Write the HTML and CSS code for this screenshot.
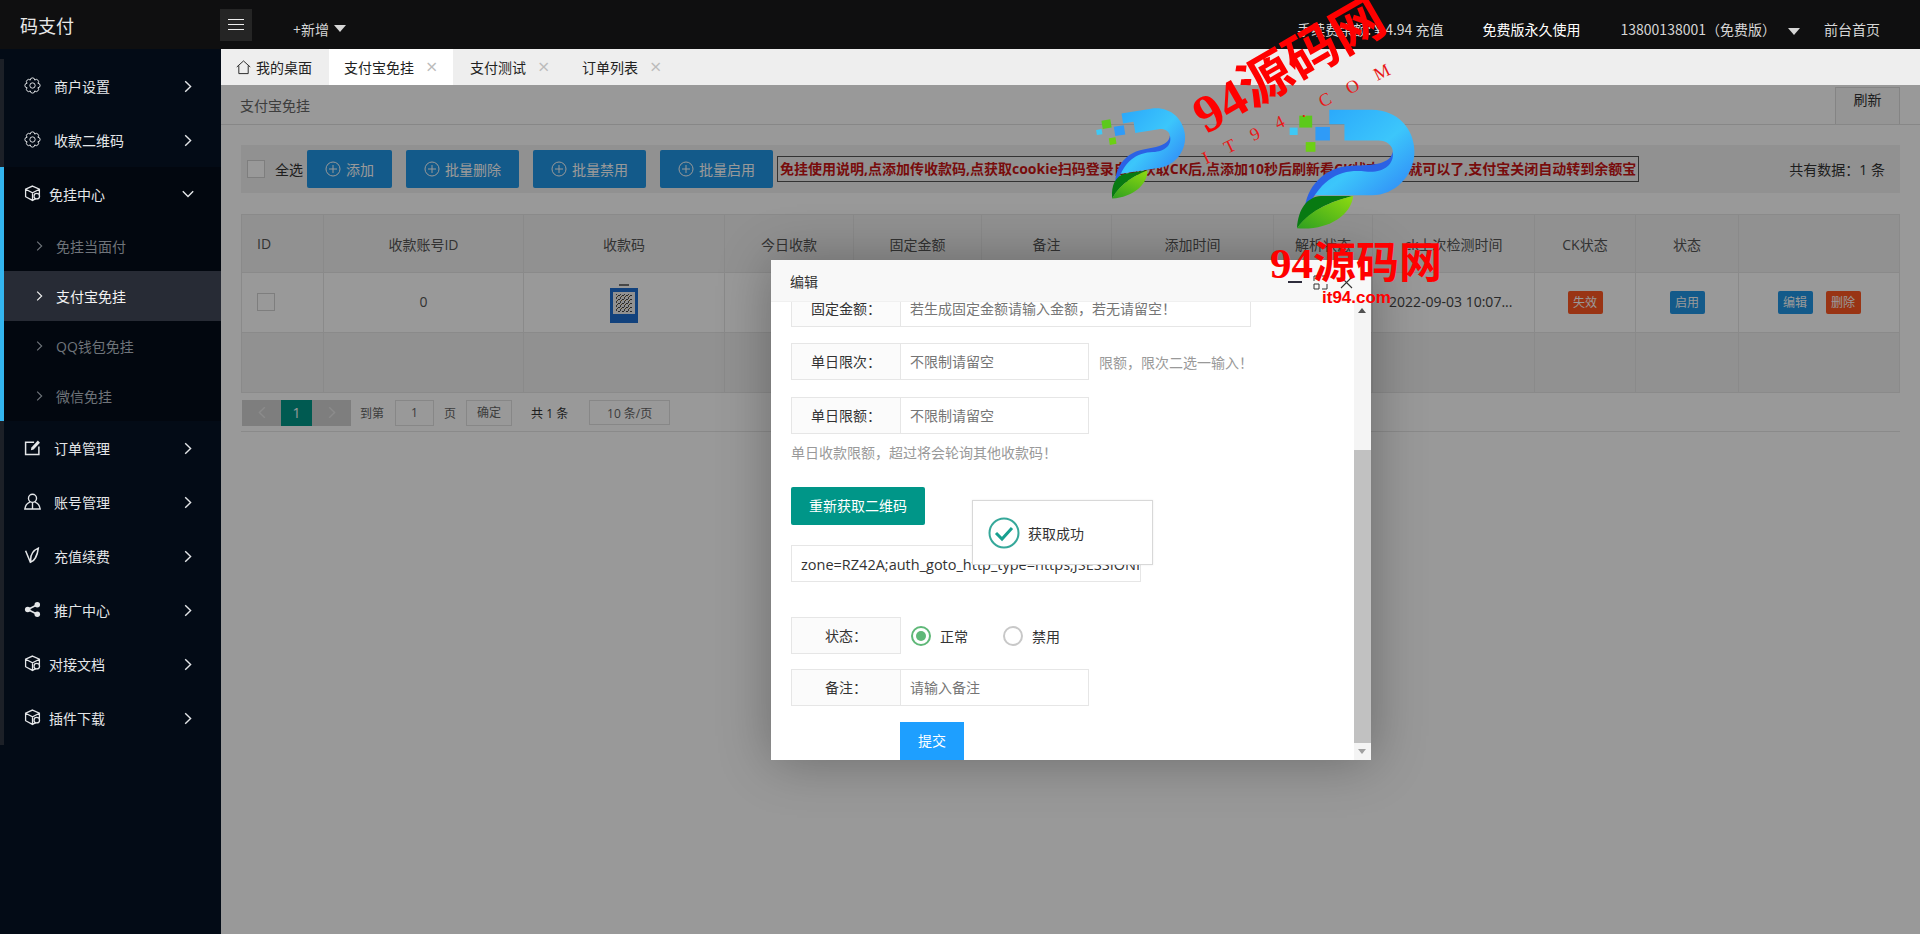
FILE: index.html
```html
<!DOCTYPE html>
<html lang="zh-CN">
<head>
    <meta charset="UTF-8">
    <meta name="viewport" content="width=device-width, initial-scale=1.0">
    <title>码支付</title>
    <link rel="stylesheet" href="styles.css">
</head>
<body>

<svg class="icon-defs" aria-hidden="true">
    <symbol id="i-gear" viewBox="0 0 16 16">
        <path d="M13.08 5.9A2.1 2.1 0 0 1 13.08 10.1A2.1 2.1 0 0 1 10.1 13.08A2.1 2.1 0 0 1 5.9 13.08A2.1 2.1 0 0 1 2.92 10.1A2.1 2.1 0 0 1 2.92 5.9A2.1 2.1 0 0 1 5.9 2.92A2.1 2.1 0 0 1 10.1 2.92A2.1 2.1 0 0 1 13.08 5.9Z" fill="none" stroke="currentColor" stroke-width=".9"/>
        <circle cx="8" cy="8" r="2.5" fill="none" stroke="currentColor" stroke-width=".9"/>
    </symbol>
    <symbol id="i-box" viewBox="0 0 16 16">
        <path d="M8 1L14.5 4V11L8 14.5L1.5 11V4ZM1.5 4L8 7.3L14.5 4M8 7.3V14.5" fill="none" stroke="currentColor" stroke-width="1.2"/>
        <circle cx="12" cy="10.5" r="2.6" fill="#030b16" stroke="currentColor" stroke-width="1.2"/>
    </symbol>
    <symbol id="i-edit" viewBox="0 0 16 16">
        <path d="M9.5 3H1.5V14.5H14V7" fill="none" stroke="currentColor" stroke-width="1.4"/>
        <path d="M6.5 10.5L7 8L13 1.5L15 3.5L9 9.8Z" fill="currentColor"/>
    </symbol>
    <symbol id="i-user" viewBox="0 0 16 16">
        <circle cx="8" cy="5" r="3.8" fill="none" stroke="currentColor" stroke-width="1.3"/>
        <path d="M5.5 8.5C3 9.5 1.2 12 .8 15H15.2C14.8 12 13 9.5 10.5 8.5M8 9.5V15" fill="none" stroke="currentColor" stroke-width="1.3"/>
    </symbol>
    <symbol id="i-leaf" viewBox="0 0 16 16">
        <path d="M1.5 3.5L6 14.5C9 13.5 12.5 9 13.5 1C9 3 5.5 7 6.5 14" fill="none" stroke="currentColor" stroke-width="1.4"/>
    </symbol>
    <symbol id="i-share" viewBox="0 0 16 16">
        <path d="M12.5 3.5L3.5 8L12.5 12.5" fill="none" stroke="currentColor" stroke-width="1.5"/>
        <circle cx="12.5" cy="3.5" r="2.6" fill="currentColor"/>
        <circle cx="3.5" cy="8" r="2.6" fill="currentColor"/>
        <circle cx="12.5" cy="12.5" r="2.6" fill="currentColor"/>
    </symbol>
    <symbol id="i-right" viewBox="0 0 8 12">
        <path d="M1.2 .8L6.6 6L1.2 11.2" fill="none" stroke="currentColor" stroke-width="1.4"/>
    </symbol>
    <symbol id="i-down" viewBox="0 0 12 8">
        <path d="M.8 1.2L6 6.6L11.2 1.2" fill="none" stroke="currentColor" stroke-width="1.4"/>
    </symbol>
    <symbol id="i-plus" viewBox="0 0 16 16">
        <circle cx="8" cy="8" r="7" fill="none" stroke="currentColor" stroke-width="1"/>
        <path d="M8 4V12M4 8H12" fill="none" stroke="currentColor" stroke-width="1"/>
    </symbol>
    <symbol id="i-home" viewBox="0 0 16 16">
        <path d="M.8 7.5L8 1L15.2 7.5M3 6V14.5H13V6" fill="none" stroke="currentColor" stroke-width="1"/>
    </symbol>
    <symbol id="i-logo" viewBox="620 260 400 380">
        <rect x="655" y="283" width="40" height="37" fill="#5cc91c"/>
        <rect x="625" y="320" width="25" height="23" fill="#3fc8f5"/>
        <rect x="705" y="318" width="45" height="42" fill="#2f9bf7"/>
        <rect x="675" y="365" width="30" height="30" fill="#6ccf14"/>
        <path d="M748 265H880C960 265 1012 325 1012 395C1012 470 950 530 880 530H690C730 470 800 440 880 440C925 440 945 425 945 395C945 375 925 360 900 360H795V310H748Z" fill="url(#logo-blue)"/>
        <path d="M945 395C950 440 910 462 860 456C790 448 720 470 672 590C668 520 720 450 800 440C850 434 935 445 945 395Z" fill="#2b62e4"/>
        <path d="M648 632C652 570 680 535 722 532H822C770 545 700 565 648 632Z" fill="#087a12"/>
        <path d="M648 632C690 570 770 545 822 532C815 595 740 640 648 632Z" fill="url(#logo-green)"/>
    </symbol>
    <pattern id="qr-dots" width="4" height="4" patternUnits="userSpaceOnUse">
        <rect width="4" height="4" fill="#eee"/>
        <rect width="2" height="1" fill="#444"/>
        <rect x="2" y="2" width="1" height="2" fill="#555"/>
        <rect x="3" y="1" width="1" height="1" fill="#7a5a20"/>
    </pattern>
    <linearGradient id="logo-blue" x1="0" y1="0" x2="1" y2="1">
        <stop offset="0" stop-color="#28a4fb"/>
        <stop offset=".55" stop-color="#3cc6fb"/>
        <stop offset="1" stop-color="#2f84f6"/>
    </linearGradient>
    <linearGradient id="logo-green" x1="0" y1="1" x2="1" y2="0">
        <stop offset="0" stop-color="#2e9f20"/>
        <stop offset="1" stop-color="#8edb10"/>
    </linearGradient>
</svg>

<header class="topbar">
    <div class="brand">码支付</div>
    <button class="menu-btn" type="button"><span></span><span></span><span></span></button>
    <div class="top-add">+新增<i class="caret"></i></div>
    <div class="top-right">
        <span class="top-fee">手续费余额:￥4.94 充值</span>
        <span class="top-free">免费版永久使用</span>
        <span class="top-user">13800138001（免费版）<i class="caret"></i></span>
        <span class="top-home">前台首页</span>
    </div>
</header>

<div class="layout">
    <aside class="sidebar">
        <div class="nav-item"><svg class="nav-icon"><use href="#i-gear"/></svg><span class="nav-text">商户设置</span><svg class="nav-arrow"><use href="#i-right"/></svg></div>
        <div class="nav-item"><svg class="nav-icon"><use href="#i-gear"/></svg><span class="nav-text">收款二维码</span><svg class="nav-arrow"><use href="#i-right"/></svg></div>
        <div class="nav-group">
            <div class="nav-item"><svg class="nav-icon"><use href="#i-box"/></svg><span class="nav-text nav-text-tight">免挂中心</span><svg class="nav-arrow-down"><use href="#i-down"/></svg></div>
            <div class="sub-item"><svg class="sub-arrow"><use href="#i-right"/></svg>免挂当面付</div>
            <div class="sub-item active"><svg class="sub-arrow"><use href="#i-right"/></svg>支付宝免挂</div>
            <div class="sub-item"><svg class="sub-arrow"><use href="#i-right"/></svg>QQ钱包免挂</div>
            <div class="sub-item"><svg class="sub-arrow"><use href="#i-right"/></svg>微信免挂</div>
        </div>
        <div class="nav-item"><svg class="nav-icon"><use href="#i-edit"/></svg><span class="nav-text">订单管理</span><svg class="nav-arrow"><use href="#i-right"/></svg></div>
        <div class="nav-item"><svg class="nav-icon"><use href="#i-user"/></svg><span class="nav-text">账号管理</span><svg class="nav-arrow"><use href="#i-right"/></svg></div>
        <div class="nav-item"><svg class="nav-icon"><use href="#i-leaf"/></svg><span class="nav-text">充值续费</span><svg class="nav-arrow"><use href="#i-right"/></svg></div>
        <div class="nav-item"><svg class="nav-icon"><use href="#i-share"/></svg><span class="nav-text">推广中心</span><svg class="nav-arrow"><use href="#i-right"/></svg></div>
        <div class="nav-item"><svg class="nav-icon"><use href="#i-box"/></svg><span class="nav-text nav-text-tight">对接文档</span><svg class="nav-arrow"><use href="#i-right"/></svg></div>
        <div class="nav-item"><svg class="nav-icon"><use href="#i-box"/></svg><span class="nav-text nav-text-tight">插件下载</span><svg class="nav-arrow"><use href="#i-right"/></svg></div>
    </aside>

    <main class="main">
        <div class="tabs">
            <div class="tab"><svg class="tab-home"><use href="#i-home"/></svg>我的桌面</div>
            <div class="tab active">支付宝免挂<span class="tab-close">×</span></div>
            <div class="tab">支付测试<span class="tab-close">×</span></div>
            <div class="tab">订单列表<span class="tab-close">×</span></div>
        </div>

        <div class="frame">
            <div class="crumb">
                <span class="crumb-text">支付宝免挂</span>
                <span class="refresh">刷新</span>
            </div>

            <div class="page">
                <div class="toolbar">
                    <span class="check"></span>
                    <span class="check-label">全选</span>
                    <span class="btn"><svg class="btn-icon"><use href="#i-plus"/></svg>添加</span>
                    <span class="btn"><svg class="btn-icon"><use href="#i-plus"/></svg>批量删除</span>
                    <span class="btn"><svg class="btn-icon"><use href="#i-plus"/></svg>批量禁用</span>
                    <span class="btn"><svg class="btn-icon"><use href="#i-plus"/></svg>批量启用</span>
                    <span class="notice">免挂使用说明,点添加传收款码,点获取cookie扫码登录自动获取CK后,点添加10秒后刷新看CK状态正常就可以了,支付宝关闭自动转到余额宝</span>
                    <span class="total">共有数据：1 条</span>
                </div>

                <table class="grid">
                    <colgroup>
                        <col class="c-82"><col class="c-200"><col class="c-201"><col class="c-129"><col class="c-128"><col class="c-130">
                        <col class="c-162"><col class="c-99"><col class="c-162"><col class="c-101"><col class="c-103"><col class="c-161">
                    </colgroup>
                    <thead>
                        <tr>
                            <th class="left">ID</th><th>收款账号ID</th><th>收款码</th><th>今日收款</th><th>固定金额</th><th>备注</th>
                            <th>添加时间</th><th>解析状态</th><th>ck上次检测时间</th><th>CK状态</th><th>状态</th><th></th>
                        </tr>
                    </thead>
                    <tbody>
                        <tr>
                            <td class="left up"><span class="check"></span></td>
                            <td class="up">0</td>
                            <td>
                                <svg class="qr" viewBox="0 0 28 40">
                                    <rect x="9" y="1" width="10" height="2" fill="#777"/>
                                    <rect y="5" width="28" height="35" fill="#1e6fd0"/>
                                    <rect x="3" y="9" width="22" height="22" fill="#f2f2f2"/>
                                    <rect x="6" y="11" width="16" height="18" fill="url(#qr-dots)"/>
                                </svg>
                            </td>
                            <td></td><td></td><td></td><td></td><td></td>
                            <td class="time up">2022-09-03 10:07...</td>
                            <td><span class="badge badge-red">失效</span></td>
                            <td><span class="badge badge-blue">启用</span></td>
                            <td><span class="badge badge-blue">编辑</span><span class="badge badge-red badge-gap">删除</span></td>
                        </tr>
                        <tr class="blank"><td></td><td></td><td></td><td></td><td></td><td></td><td></td><td></td><td></td><td></td><td></td><td></td></tr>
                    </tbody>
                </table>

                <div class="pager">
                    <span class="pg-nav"><svg class="pg-arrow flip"><use href="#i-right"/></svg></span>
                    <span class="pg-cur">1</span>
                    <span class="pg-nav"><svg class="pg-arrow"><use href="#i-right"/></svg></span>
                    <span class="pg-text pg-to">到第</span>
                    <span class="pg-input">1</span>
                    <span class="pg-text">页</span>
                    <span class="pg-ok">确定</span>
                    <span class="pg-count">共 1 条</span>
                    <span class="pg-size">10 条/页</span>
                </div>
            </div>

            <div class="shade"></div>
        </div>
    </main>
</div>

<section class="modal">
    <div class="modal-head">
        <span>编辑</span>
        <div class="modal-tools">
            <i class="tool-min"></i>
            <svg class="tool-svg" viewBox="0 0 15 15"><path d="M1 6V1H6M9 14H14V9M1 9H6V14H1ZM9 1H14" fill="none" stroke="#333" stroke-width="1"/></svg>
            <svg class="tool-svg" viewBox="0 0 15 15"><path d="M2 2L13 13M13 2L2 13" fill="none" stroke="#333" stroke-width="1.1"/></svg>
        </div>
    </div>
    <div class="modal-body">
        <div class="form">
            <div class="row">
                <label class="row-label">固定金额：</label>
                <div class="row-input wide">若生成固定金额请输入金额，若无请留空！</div>
            </div>
            <div class="row row-gap">
                <label class="row-label">单日限次：</label>
                <div class="row-input">不限制请留空</div>
                <span class="row-aux">限额，限次二选一输入！</span>
            </div>
            <div class="row row-gap2">
                <label class="row-label">单日限额：</label>
                <div class="row-input">不限制请留空</div>
            </div>
            <p class="help">单日收款限额，超过将会轮询其他收款码！</p>
            <div class="green-btn">重新获取二维码</div>
            <div class="cookie">zone=RZ42A;auth_goto_http_type=https;JSESSIONID=RZ42</div>
            <div class="row row-state">
                <label class="row-label row-label-plain">状态：</label>
                <span class="radio on"></span><span class="radio-text">正常</span>
                <span class="radio"></span><span class="radio-text">禁用</span>
            </div>
            <div class="row row-note">
                <label class="row-label">备注：</label>
                <div class="row-input">请输入备注</div>
            </div>
            <div class="submit">提交</div>
        </div>
        <div class="scroll">
            <i class="scroll-up"></i>
            <div class="scroll-track"><div class="scroll-thumb"></div></div>
            <i class="scroll-down"></i>
        </div>
    </div>
</section>

<div class="toast">
    <svg class="toast-icon" viewBox="0 0 32 32">
        <circle cx="16" cy="16" r="14.5" fill="none" stroke="#36a89a" stroke-width="2"/>
        <path d="M8 16L14 22L24 11" fill="none" stroke="#18a090" stroke-width="3"/>
    </svg>
    <span>获取成功</span>
</div>

<!-- watermark stamped over the screenshot -->
<svg class="logo logo-small"><use href="#i-logo"/></svg>
<svg class="logo logo-big"><use href="#i-logo"/></svg>
<div class="mark mark-tilt">94源码网</div>
<div class="mark-sub">IT94.COM</div>
<div class="mark mark-flat">94源码网</div>
<div class="mark-url">it94.com</div>

</body>
</html>
```

FILE: styles.css
```css
* {
    box-sizing: border-box;
}
html, body {
    height: 100%;
}
body {
    margin: 0;
    overflow: hidden;
    font-family: "Open Sans", "Noto Sans CJK SC", sans-serif;
    font-size: 14px;
    color: #333;
    background: #fff;
}
.icon-defs {
    position: absolute;
    width: 0;
    height: 0;
}

/* top bar */
.topbar {
    display: flex;
    align-items: center;
    height: 49px;
    background: #0f0f10;
    color: #d6d6d6;
}
.brand {
    width: 220px;
    padding-left: 20px;
    font-size: 18px;
    color: #e8e8e8;
}
.menu-btn {
    display: flex;
    flex-direction: column;
    justify-content: center;
    gap: 4px;
    width: 32px;
    height: 32px;
    padding: 0 8px;
    border: 0;
    background: #252525;
}
.menu-btn span {
    display: block;
    height: 1px;
    background: #eee;
}
.top-add {
    display: flex;
    align-items: center;
    margin-left: 41px;
    padding-top: 8px;
}
.caret {
    display: inline-block;
    width: 0;
    height: 0;
    margin-left: 5px;
    border-left: 6px solid transparent;
    border-right: 6px solid transparent;
    border-top: 7px solid #d6d6d6;
}
.top-right {
    display: flex;
    align-items: center;
    margin-left: auto;
    padding: 8px 40px 0 0;
    white-space: nowrap;
}
.top-fee {
    font-family: "Noto Sans CJK SC", sans-serif;
}
.top-free {
    margin-left: 39px;
    color: #fff;
}
.top-user {
    margin-left: 40px;
    font-family: "Noto Sans CJK SC", sans-serif;
}
.top-user .caret {
    margin-left: 12px;
}
.top-home {
    margin-left: 24px;
}

/* sidebar */
.layout {
    display: flex;
    height: calc(100% - 49px);
}
.sidebar {
    flex: 0 0 221px;
    padding-top: 10px;
    background: #030b16;
    color: #e4e6e8;
}
.nav-item {
    display: flex;
    align-items: center;
    height: 54px;
    padding-left: 20px;
    border-left: 4px solid #1c2027;
}
.nav-group {
    background: #02070f;
}
.nav-group .nav-item, .sub-item {
    border-left-color: #33b5ef;
}
.nav-icon {
    flex: none;
    width: 17px;
    height: 17px;
    margin-top: -2px;
}
.nav-text {
    margin-left: 13px;
    margin-top: -1px;
}
.nav-text-tight {
    margin-left: 8px;
}
.nav-arrow {
    width: 8px;
    height: 13px;
    margin-left: auto;
    margin-right: 29px;
}
.nav-arrow-down {
    width: 12px;
    height: 8px;
    margin-left: auto;
    margin-right: 27px;
}
.sub-item {
    display: flex;
    align-items: center;
    height: 50px;
    padding-left: 32px;
    border-left: 4px solid #33b5ef;
    color: #6f747a;
}
.sub-item.active {
    background: #272b35;
    color: #f2f2f2;
}
.sub-arrow {
    width: 7px;
    height: 10px;
    margin-right: 13px;
}

/* tabs */
.main {
    flex: 1;
    min-width: 0;
    display: flex;
    flex-direction: column;
}
.tabs {
    display: flex;
    gap: 2px;
    height: 36px;
    background: #eee;
    color: #222;
}
.tab {
    display: flex;
    align-items: center;
    padding: 0 15px;
}
.tab.active {
    background: #fff;
}
.tab-home {
    width: 15px;
    height: 15px;
    margin-right: 5px;
}
.tab-close {
    margin-left: 12px;
    width: 12px;
    font-size: 20px;
    line-height: 1;
    color: #bbb;
}

/* page under the shade */
.frame {
    position: relative;
    flex: 1;
    background: #fff;
}
.crumb {
    display: flex;
    justify-content: space-between;
    align-items: flex-end;
    height: 40px;
    padding: 0 20px 0 19px;
    border-bottom: 1px solid #e2e2e2;
}
.crumb-text {
    align-self: center;
    color: #666;
}
.refresh {
    width: 65px;
    height: 37px;
    padding-top: 1px;
    border: 1px solid #ddd;
    border-bottom: 0;
    background: #f8f8f8;
    text-align: center;
}
.page {
    padding: 20px 20px 0;
}
.toolbar {
    display: flex;
    align-items: center;
    height: 48px;
    padding: 0 15px 0 6px;
    background: #f2f2f2;
    white-space: nowrap;
}
.check {
    display: inline-block;
    width: 18px;
    height: 18px;
    border: 1px solid #d2d2d2;
    background: #fff;
    vertical-align: middle;
}
.check-label {
    margin: 0 4px 0 10px;
}
.btn {
    display: flex;
    align-items: center;
    height: 38px;
    margin-right: 14px;
    padding: 0 18px;
    border-radius: 2px;
    background: #2196e6;
    color: #fff;
}
.btn-icon {
    width: 16px;
    height: 16px;
    margin-right: 5px;
}
.notice {
    margin-left: -10px;
    padding: 2px;
    border: 1px solid #555;
    font-weight: 700;
    color: #c91414;
    line-height: 20px;
}
.total {
    margin-left: auto;
    color: #333;
}
.grid {
    width: 1658px;
    margin-top: 21px;
    table-layout: fixed;
    border-collapse: collapse;
    color: #555;
}
.c-82 { width: 82px; }
.c-200 { width: 200px; }
.c-201 { width: 201px; }
.c-129 { width: 129px; }
.c-128 { width: 128px; }
.c-130 { width: 130px; }
.c-162 { width: 162px; }
.c-99 { width: 99px; }
.c-101 { width: 101px; }
.c-103 { width: 103px; }
.c-161 { width: 161px; }
.grid th {
    height: 58px;
    border: 1px solid #e6e6e6;
    background: #f2f2f2;
    font-weight: 400;
    white-space: nowrap;
}
.grid td {
    height: 60px;
    border: 1px solid #e6e6e6;
    text-align: center;
}
.grid .blank td {
    background: #f2f2f2;
}
.grid .left {
    padding-left: 15px;
    text-align: left;
}
.grid .up {
    padding-bottom: 4px;
}
.grid .time {
    padding-left: 16px;
    text-align: left;
    white-space: nowrap;
    color: #444;
}
.qr {
    display: block;
    width: 28px;
    height: 40px;
    margin: 0 auto;
}
.badge {
    display: inline-block;
    width: 35px;
    height: 23px;
    border-radius: 2px;
    font-size: 12px;
    line-height: 23px;
    color: #fff;
}
.badge-red {
    background: #ff5722;
}
.badge-blue {
    background: #2196e6;
}
.badge-gap {
    margin-left: 13px;
}
.pager {
    display: flex;
    align-items: center;
    height: 39px;
    padding: 7px 0 6px 1px;
    border-bottom: 1px solid #e6e6e6;
    color: #666;
}
.pg-nav {
    display: flex;
    align-items: center;
    justify-content: center;
    width: 39px;
    height: 26px;
    background: #d2d2d2;
    color: #e8e8e8;
}
.pg-arrow {
    width: 8px;
    height: 13px;
}
.flip {
    transform: scaleX(-1);
}
.pg-cur {
    width: 31px;
    height: 26px;
    background: #009688;
    color: #fff;
    line-height: 26px;
    text-align: center;
}
.pg-text {
    font-size: 12px;
}
.pg-to {
    margin: 0 11px 0 9px;
}
.pg-input {
    width: 39px;
    height: 26px;
    margin-right: 10px;
    border: 1px solid #e2e2e2;
    font-size: 12px;
    line-height: 24px;
    text-align: center;
}
.pg-ok {
    width: 46px;
    height: 26px;
    margin-left: 10px;
    border: 1px solid #e2e2e2;
    font-size: 12px;
    line-height: 24px;
    text-align: center;
}
.pg-count {
    margin-left: 19px;
    font-size: 12px;
    color: #333;
}
.pg-size {
    width: 81px;
    height: 25px;
    margin-left: 21px;
    border: 1px solid #e2e2e2;
    font-size: 12px;
    line-height: 25px;
    text-align: center;
}
.shade {
    position: absolute;
    inset: 0;
    background: rgba(0, 0, 0, 0.4);
}

/* modal */
.modal {
    position: absolute;
    left: 771px;
    top: 260px;
    width: 600px;
    height: 500px;
    display: flex;
    flex-direction: column;
    overflow: hidden;
    background: #fff;
    box-shadow: 1px 1px 50px rgba(0, 0, 0, 0.3);
}
.modal-head {
    position: relative;
    flex: none;
    display: flex;
    justify-content: space-between;
    align-items: center;
    height: 42px;
    padding: 0 17px 0 19px;
    border-bottom: 1px solid #f0f0f0;
    background: #f8f8f8;
}
.modal-tools {
    display: flex;
    align-items: center;
    gap: 11px;
    padding-top: 3px;
}
.tool-min {
    width: 14px;
    height: 2px;
    background: #2e2d3c;
}
.tool-svg {
    width: 15px;
    height: 15px;
}
.modal-body {
    flex: 1;
    min-height: 0;
    display: flex;
}
.form {
    flex: 1;
    margin-top: -12px;
    padding-left: 20px;
}
.row {
    display: flex;
    align-items: center;
    height: 37px;
}
.row-gap {
    margin-top: 16px;
}
.row-gap2 {
    margin-top: 17px;
}
.row-state {
    margin-top: 35px;
}
.row-note {
    margin-top: 15px;
}
.row-label {
    flex: none;
    width: 110px;
    height: 100%;
    border: 1px solid #e6e6e6;
    background: #fbfbfb;
    line-height: 35px;
    text-align: center;
}
.row-input {
    width: 188px;
    height: 100%;
    padding-left: 9px;
    border: 1px solid #e6e6e6;
    border-left: 0;
    line-height: 35px;
    color: #757575;
}
.row-input.wide {
    width: 350px;
}
.row-aux {
    margin-left: 10px;
    color: #999;
}
.help {
    margin: 9px 0 0;
    line-height: 20px;
    color: #999;
}
.green-btn {
    width: 134px;
    height: 38px;
    margin-top: 24px;
    border-radius: 2px;
    background: #009688;
    color: #fff;
    line-height: 38px;
    text-align: center;
}
.cookie {
    width: 350px;
    height: 37px;
    margin-top: 20px;
    padding: 1px 9px 0;
    overflow: hidden;
    border: 1px solid #e6e6e6;
    font-size: 14.5px;
    line-height: 35px;
    white-space: nowrap;
}
.radio {
    position: relative;
    width: 20px;
    height: 20px;
    margin-left: 10px;
    border: 2px solid #c8c8c8;
    border-radius: 50%;
}
.radio.on {
    border-color: #5fb878;
}
.radio.on::after {
    content: "";
    position: absolute;
    inset: 3px;
    border-radius: 50%;
    background: #5fb878;
}
.radio-text {
    margin: 0 25px 0 9px;
}
.submit {
    width: 64px;
    height: 38px;
    margin: 16px 0 0 109px;
    background: #1e9fff;
    color: #fff;
    line-height: 38px;
    text-align: center;
}
.scroll {
    flex: none;
    display: flex;
    flex-direction: column;
    width: 17px;
    background: #f4f4f4;
}
.scroll-up, .scroll-down {
    flex: none;
    height: 17px;
    position: relative;
}
.scroll-up::after, .scroll-down::after {
    content: "";
    position: absolute;
    left: 4px;
    top: 6px;
    border-left: 4px solid transparent;
    border-right: 4px solid transparent;
}
.scroll-up::after {
    border-bottom: 5px solid #505050;
}
.scroll-down::after {
    border-top: 5px solid #a0a0a0;
}
.scroll-track {
    flex: 1;
    padding-top: 131px;
}
.scroll-thumb {
    height: 293px;
    background: #c1c1c1;
}

/* message toast */
.toast {
    position: absolute;
    left: 972px;
    top: 500px;
    display: flex;
    align-items: center;
    width: 181px;
    height: 65px;
    padding-left: 15px;
    border: 1px solid #d8d8d8;
    background: #fff;
    box-shadow: 0 0 2px rgba(0, 0, 0, 0.08);
}
.toast-icon {
    width: 32px;
    height: 32px;
    margin-right: 8px;
}

/* watermark */
.logo {
    position: absolute;
    overflow: visible;
}
.logo-big {
    left: 1288px;
    top: 108px;
    width: 129px;
    height: 123px;
}
.logo-small {
    left: 1099px;
    top: 107px;
    width: 90px;
    height: 90px;
    transform: rotate(-9deg);
}
.mark {
    position: absolute;
    font-family: "Liberation Serif", "Noto Sans CJK SC", serif;
    font-weight: 700;
    color: #f00;
    white-space: nowrap;
}
.mark-tilt {
    left: 1183px;
    top: 34px;
    font-size: 53px;
    line-height: 64px;
    transform: rotate(-30deg);
}
.mark-flat {
    left: 1270px;
    top: 238px;
    font-size: 43px;
    line-height: 52px;
}
.mark-sub {
    position: absolute;
    left: 1192px;
    top: 98px;
    font-family: "Liberation Serif", serif;
    font-size: 18px;
    line-height: 24px;
    letter-spacing: 18px;
    color: #e81818;
    white-space: nowrap;
    transform: rotate(-26deg);
}
.mark-url {
    position: absolute;
    left: 1322px;
    top: 288px;
    font-family: "Liberation Sans", sans-serif;
    font-size: 17px;
    font-weight: 700;
    line-height: 20px;
    color: #f00;
}
```
